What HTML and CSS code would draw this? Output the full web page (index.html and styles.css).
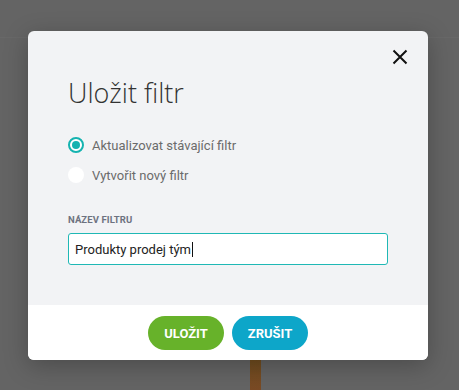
FILE: index.html
```html
<!DOCTYPE html>
<html lang="cs">
<head>
<meta charset="utf-8">
<title>Uložit filtr</title>
<link rel="stylesheet" href="styles.css">
</head>
<body>
<div class="page">
  <div class="bg-line bg-line-1"></div>
  <div class="modal">
    <button class="close" aria-label="Zavřít">
      <svg width="16" height="16" viewBox="0 0 16 16"><path d="M1.5 1.5 L14.5 14.5 M14.5 1.5 L1.5 14.5" stroke="#111" stroke-width="2" fill="none"/></svg>
    </button>
    <div class="modal-body">
      <h1 class="title">Uložit filtr</h1>
      <div class="radios">
        <label class="radio-row"><span class="radio checked"></span><span class="radio-label">Aktualizovat stávající filtr</span></label>
        <label class="radio-row"><span class="radio"></span><span class="radio-label">Vytvořit nový filtr</span></label>
      </div>
      <div class="field">
        <div class="field-label">NÁZEV FILTRU</div>
        <div class="input">Produkty prodej tým<span class="caret"></span></div>
      </div>
    </div>
    <div class="modal-footer">
      <button class="btn btn-save">ULOŽIT</button>
      <button class="btn btn-cancel">ZRUŠIT</button>
    </div>
  </div>
  <div class="stem"></div>
</div>
</body>
</html>
```
FILE: styles.css
```css
html, body {
  margin: 0;
  padding: 0;
  height: 100%;
  overflow: hidden;
}
body {
  background: #646464;
  font-family: Roboto, "Liberation Sans", sans-serif;
}
.page {
  padding: 31px 0 0 28px;
  position: relative;
}
.bg-line {
  position: absolute;
  left: 0;
  right: 0;
  height: 1px;
  background: #686868;
}
.bg-line-1 { top: 37px; }
.modal {
  position: relative;
  width: 400px;
  background: #f2f3f5;
  border-radius: 6px;
  box-shadow: 0 6px 24px rgba(0,0,0,0.25);
  overflow: hidden;
}
.close {
  position: absolute;
  right: 20px;
  top: 18px;
  width: 16px;
  height: 16px;
  padding: 0;
  border: 0;
  background: none;
  display: flex;
}
.modal-body {
  padding: 45px 40px 40px 40px;
}
.title {
  margin: 0;
  font-family: "Open Sans", "Noto Sans", sans-serif;
  font-weight: 300;
  font-size: 27px;
  line-height: 34px;
  color: #333;
  letter-spacing: 0;
}
.radios {
  margin-top: 26px;
  display: flex;
  flex-direction: column;
  gap: 12px;
}
.radio-row {
  display: flex;
  align-items: center;
  gap: 8px;
  height: 18px;
}
.radio {
  width: 16px;
  height: 16px;
  border-radius: 50%;
  background: #fff;
  box-sizing: border-box;
  display: flex;
  align-items: center;
  justify-content: center;
}
.radio.checked {
  border: 2px solid #15b3b0;
}
.radio.checked::after {
  content: "";
  width: 8px;
  height: 8px;
  border-radius: 50%;
  background: #15b3b0;
}
.radio-label {
  font-size: 13px;
  color: #6b6b6b;
}
.field {
  margin-top: 30px;
}
.field-label {
  font-size: 9.5px;
  font-weight: 700;
  color: #6d7280;
  letter-spacing: 0.1px;
  line-height: 12px;
}
.input {
  margin-top: 7px;
  height: 32px;
  box-sizing: border-box;
  border: 1px solid #1fb8b5;
  border-radius: 3px;
  background: #fff;
  padding: 0 6px;
  display: flex;
  align-items: center;
  font-size: 13px;
  color: #222;
}
.caret {
  display: inline-block;
  width: 1px;
  height: 15px;
  background: #111;
  margin-left: 1px;
}
.modal-footer {
  background: #fff;
  height: 55px;
  box-sizing: border-box;
  padding-top: 11px;
  display: flex;
  justify-content: center;
  gap: 8px;
}
.btn {
  width: 76px;
  height: 34px;
  border: 0;
  border-radius: 17px;
  color: #fff;
  font-family: Roboto, "Liberation Sans", sans-serif;
  font-weight: 700;
  font-size: 13px;
  letter-spacing: 0;
  padding: 0;
}
.btn-save { background: #67b22a; }
.btn-cancel { background: #0da6c9; }
.stem {
  margin-left: 222px;
  width: 11px;
  height: 30px;
  background: linear-gradient(#6f4c1e, #7a4a25);
}
```
